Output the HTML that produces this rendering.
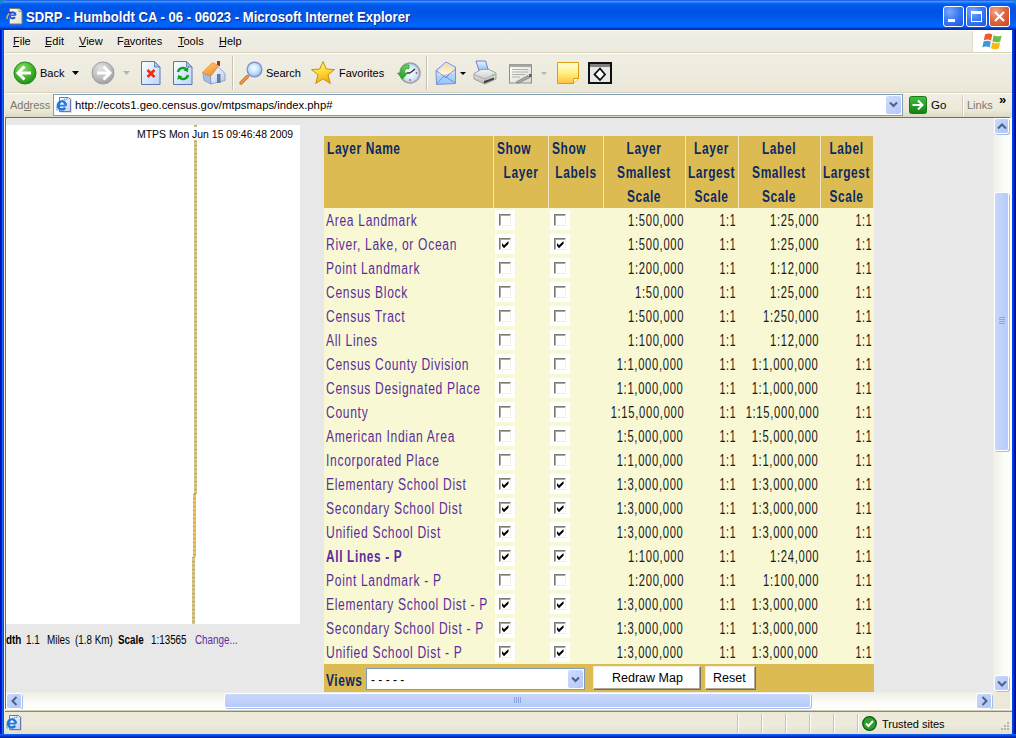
<!DOCTYPE html><html><head><meta charset="utf-8"><style>
*{margin:0;padding:0;box-sizing:border-box}
html,body{width:1016px;height:738px;overflow:hidden;background:#1A86C0;font-family:"Liberation Sans",sans-serif}
.ab{position:absolute}
.t{position:absolute;white-space:nowrap;line-height:1}
svg{position:absolute;overflow:visible}
.sb{position:absolute;border-radius:2px;background:linear-gradient(135deg,#CAD8FC,#B8CCF9 60%,#B0C6F8);box-shadow:0 0 0 1px #FFFFFF, 1px 1px 0 1px #A8BCE8}
</style></head><body>
<div class="ab" style="left:0px;top:0px;width:1016px;height:30px;background:linear-gradient(#0A3FD8 0px,#3D8FFF 1px,#3D95FF 2px,#0A6CF8 3px,#0058EE 5px,#0054E3 12px,#0058EA 18px,#0064FA 23px,#0066FF 26px,#005CF5 27px,#0040D4 28px,#0030B8 29px,#0030B8 30px);border-radius:7px 7px 0 0"></div>
<div class="ab" style="left:0px;top:30px;width:4px;height:708px;background:linear-gradient(90deg,#0010C8 0px,#0010C8 1px,#0420C8 1px,#0420C8 2px,#1868F0 2px,#1868F0 3px,#0050E8 3px);"></div>
<div class="ab" style="left:1012px;top:30px;width:4px;height:708px;background:linear-gradient(90deg,#0040F0 0px,#0040F0 1px,#0034D8 1px,#0034D8 2px,#001AA0 2px,#001AA0 3px,#001088 3px);"></div>
<div class="ab" style="left:0px;top:734px;width:1016px;height:4px;background:linear-gradient(#1A6AFF,#0040D8 50%,#001A98);"></div>
<div class="ab" style="left:4px;top:30px;width:1008px;height:704px;background:#ECE9D8;"></div>
<svg style="left:2px;top:4px" width="22" height="22" viewBox="0 0 22 22">
<defs><linearGradient id="tpg" x1="0" y1="0" x2="1" y2="1"><stop offset="0" stop-color="#FFFFFF"/><stop offset="1" stop-color="#E4E0CC"/></linearGradient></defs>
<path d="M7.5 4.5h9.5l3 3v12.5h-12.5z" fill="url(#tpg)" stroke="#8A7A5A" stroke-width="1"/>
<path d="M17 4.5v3h3" fill="#FFFFFF" stroke="#8A7A5A" stroke-width="0.8"/>
<path d="M13.6 11.2 A3 3 0 1 0 13 13.2" stroke="#2458D8" stroke-width="2" fill="none"/>
<path d="M8.2 11.2h5.4" stroke="#2458D8" stroke-width="1.4"/>
<path d="M13 8.5l1.5-0.5" stroke="#40C0F0" stroke-width="1.2"/>
<path d="M4.8 15 C5 12.5,6 10,8.5 8.5" stroke="#E8B060" stroke-width="1.4" fill="none"/>
<path d="M7 9.2 L9 8" stroke="#101880" stroke-width="1.2"/>
</svg>
<div class="t" style="left:27.00px;top:11.00px;font-size:14px;color:#0A1E6E;font-weight:bold;transform:scaleX(0.935);transform-origin:left;opacity:.75">SDRP - Humboldt CA - 06 - 06023 - Microsoft Internet Explorer</div>
<div class="t" style="left:26.00px;top:10.00px;font-size:14px;color:#FFFFFF;font-weight:bold;transform:scaleX(0.935);transform-origin:left;">SDRP - Humboldt CA - 06 - 06023 - Microsoft Internet Explorer</div>
<div class="ab" style="left:943px;top:6px;width:21px;height:21px;border:1px solid #FFFFFF;border-radius:3px;background:radial-gradient(circle at 30% 25%,#7AA8FF,#3C7CF5 45%,#2762E8 80%,#1D50D8)"></div>
<div class="ab" style="left:966px;top:6px;width:21px;height:21px;border:1px solid #FFFFFF;border-radius:3px;background:radial-gradient(circle at 30% 25%,#7AA8FF,#3C7CF5 45%,#2762E8 80%,#1D50D8)"></div>
<div class="ab" style="left:989px;top:6px;width:21px;height:21px;border:1px solid #FFFFFF;border-radius:3px;background:radial-gradient(circle at 30% 25%,#F2A58A,#E4673E 45%,#D4502A 80%,#C0401C)"></div>
<div class="ab" style="left:948px;top:19px;width:7px;height:3px;background:#FFFFFF;"></div>
<div class="ab" style="left:971px;top:11px;width:11px;height:11px;border:1px solid #FFF;border-top-width:3px"></div>
<svg style="left:989px;top:6px" width="21" height="21" viewBox="0 0 21 21"><path d="M6 6L15 15M15 6L6 15" stroke="#FFF" stroke-width="2.2"/></svg>
<div class="ab" style="left:4px;top:30px;width:1008px;height:1px;background:#FFFBF0;"></div>
<div class="ab" style="left:4px;top:31px;width:969px;height:21px;background:linear-gradient(#F0EEE5,#EDEBE0);"></div>
<div class="ab" style="left:973px;top:31px;width:39px;height:21px;background:#FFFFFF;"></div>
<div class="ab" style="left:972px;top:31px;width:1px;height:21px;background:#E0DCCB;"></div>
<div class="ab" style="left:4px;top:52px;width:1008px;height:1px;background:#D8D2BD;"></div>
<div class="ab" style="left:4px;top:53px;width:1008px;height:1px;background:#FFFFFF;"></div>
<div class="t" style="left:13.00px;top:36.00px;font-size:11px;color:#000;font-weight:normal;">File</div>
<div class="t" style="left:45.00px;top:36.00px;font-size:11px;color:#000;font-weight:normal;">Edit</div>
<div class="t" style="left:79.00px;top:36.00px;font-size:11px;color:#000;font-weight:normal;">View</div>
<div class="t" style="left:117.00px;top:36.00px;font-size:11px;color:#000;font-weight:normal;">Favorites</div>
<div class="t" style="left:178.00px;top:36.00px;font-size:11px;color:#000;font-weight:normal;">Tools</div>
<div class="t" style="left:219.00px;top:36.00px;font-size:11px;color:#000;font-weight:normal;">Help</div>
<div class="ab" style="left:13px;top:46px;width:6px;height:1px;background:#000;"></div>
<div class="ab" style="left:45px;top:46px;width:6px;height:1px;background:#000;"></div>
<div class="ab" style="left:79px;top:46px;width:7px;height:1px;background:#000;"></div>
<div class="ab" style="left:124px;top:46px;width:7px;height:1px;background:#000;"></div>
<div class="ab" style="left:178px;top:46px;width:6px;height:1px;background:#000;"></div>
<div class="ab" style="left:219px;top:46px;width:7px;height:1px;background:#000;"></div>
<svg style="left:983px;top:32px" width="20" height="19" viewBox="0 0 20 19">
<path d="M2 2.5 C4.5 1,7 1.2,9.3 2.6 L8 8.6 C5.8 7.2,3.4 7.2,0.8 8.5Z" fill="#F05A28"/>
<path d="M10.6 3.2 C13 4.6,15.6 4.6,18.6 3.4 L17.3 9.4 C14.5 10.6,12 10.5,9.4 9.2Z" fill="#6DBE45"/>
<path d="M0.6 9.6 C3.2 8.3,5.6 8.3,7.8 9.7 L6.6 15.6 C4.4 14.2,2 14.2,-0.6 15.6Z" fill="#3A9BD9"/>
<path d="M9.2 10.3 C11.8 11.6,14.3 11.7,17.1 10.5 L15.8 16.5 C13 17.7,10.6 17.6,8 16.3Z" fill="#FDB813"/>
</svg>
<div class="ab" style="left:4px;top:54px;width:1008px;height:38px;background:linear-gradient(#F0EEE4,#EDEADD 70%,#EAE7D8);"></div>
<div class="ab" style="left:4px;top:92px;width:1008px;height:1px;background:#D8D2BD;"></div>
<div class="ab" style="left:4px;top:93px;width:1008px;height:1px;background:#FFFFFF;"></div>
<div class="ab" style="left:232px;top:56px;width:1px;height:34px;background:#C5C2B2;"></div>
<div class="ab" style="left:233px;top:56px;width:1px;height:34px;background:#FFFFFF;"></div>
<div class="ab" style="left:426px;top:56px;width:1px;height:34px;background:#C5C2B2;"></div>
<div class="ab" style="left:427px;top:56px;width:1px;height:34px;background:#FFFFFF;"></div>
<svg style="left:13px;top:61px" width="24" height="24" viewBox="0 0 24 24">
<defs><radialGradient id="gb" cx="0.4" cy="0.3" r="0.75"><stop offset="0" stop-color="#8EE06A"/><stop offset="0.5" stop-color="#4CB830"/><stop offset="1" stop-color="#1C8E16"/></radialGradient></defs>
<circle cx="12" cy="12" r="11" fill="url(#gb)" stroke="#1A8A18" stroke-width="1"/>
<path d="M5.5 12h12.5" stroke="#FFF" stroke-width="3"/>
<path d="M11.5 5.5L5 12l6.5 6.5" stroke="#FFF" stroke-width="3" fill="none"/>
</svg>
<div class="t" style="left:40.00px;top:68.00px;font-size:11px;color:#000;font-weight:normal;">Back</div>
<svg style="left:72px;top:71px" width="7" height="4"><path d="M0 0h7l-3.5 4z" fill="#000"/></svg>
<svg style="left:91px;top:61px" width="24" height="24" viewBox="0 0 24 24">
<defs><radialGradient id="gf" cx="0.4" cy="0.3" r="0.75"><stop offset="0" stop-color="#E4E4E4"/><stop offset="0.6" stop-color="#BDBDBD"/><stop offset="1" stop-color="#9A9A9A"/></radialGradient></defs>
<circle cx="12" cy="12" r="11" fill="url(#gf)" stroke="#A0A0A0" stroke-width="1"/>
<path d="M6 12h12.5" stroke="#FFF" stroke-width="3"/>
<path d="M12.5 5.5L19 12l-6.5 6.5" stroke="#FFF" stroke-width="3" fill="none"/>
</svg>
<svg style="left:123px;top:71px" width="7" height="4"><path d="M0 0h7l-3.5 4z" fill="#B4B4B0"/></svg>
<svg style="left:141px;top:61px" width="20" height="24" viewBox="0 0 20 24">
<defs><linearGradient id="pg141" x1="0" y1="0" x2="1" y2="1"><stop offset="0" stop-color="#FFFFFF"/><stop offset="1" stop-color="#B8D4F8"/></linearGradient></defs>
<path d="M0.5 0.5h13l5.5 5.5v17.5h-18.5z" fill="url(#pg141)" stroke="#5E72B8" stroke-width="1"/>
<path d="M13.5 0.5v5.5h5.5z" fill="#A8C0EC" stroke="#5E72B8" stroke-width="0.8"/>
<path d="M6.5 9L13.5 16M13.5 9L6.5 16" stroke="#F02A10" stroke-width="2.6"/></svg>
<svg style="left:173px;top:61px" width="20" height="24" viewBox="0 0 20 24">
<defs><linearGradient id="pg173" x1="0" y1="0" x2="1" y2="1"><stop offset="0" stop-color="#FFFFFF"/><stop offset="1" stop-color="#B8D4F8"/></linearGradient></defs>
<path d="M0.5 0.5h13l5.5 5.5v17.5h-18.5z" fill="url(#pg173)" stroke="#5E72B8" stroke-width="1"/>
<path d="M13.5 0.5v5.5h5.5z" fill="#A8C0EC" stroke="#5E72B8" stroke-width="0.8"/>
<path d="M5 11 A5 5 0 0 1 13.5 8.5" stroke="#10A020" stroke-width="2.4" fill="none"/><path d="M15.5 6l-0.5 5-4.5-1.5z" fill="#10A020"/><path d="M15 14 A5 5 0 0 1 6.5 16.5" stroke="#10A020" stroke-width="2.4" fill="none"/><path d="M4.5 19l0.5-5 4.5 1.5z" fill="#10A020"/></svg>
<svg style="left:202px;top:61px" width="24" height="24" viewBox="0 0 24 24">
<defs><linearGradient id="hw" x1="0" y1="0" x2="1" y2="1"><stop offset="0" stop-color="#FFFFFF"/><stop offset="1" stop-color="#B0C8EC"/></linearGradient>
<linearGradient id="hr" x1="0" y1="0" x2="0.6" y2="1"><stop offset="0" stop-color="#FFD080"/><stop offset="1" stop-color="#F09030"/></linearGradient></defs>
<rect x="15" y="0" width="3" height="5" fill="#B02818"/>
<path d="M1 12L8.5 15.5 9 23 2 19.5z" fill="#A0C0EC" stroke="#7888C0" stroke-width="0.7"/>
<path d="M8.5 15.5L16 5.5 23 12.5 23 19.5 9 23z" fill="url(#hw)" stroke="#7888C0" stroke-width="0.7"/>
<path d="M0.3 11.5L10.5 1.5 16.5 4.5 8.5 15.5z" fill="url(#hr)" stroke="#E08020" stroke-width="0.6"/>
<rect x="15" y="13" width="3.5" height="9" fill="#6A76A8"/>
</svg>
<svg style="left:238px;top:60px" width="26" height="26" viewBox="0 0 26 26">
<defs><radialGradient id="sl" cx="0.45" cy="0.4" r="0.6"><stop offset="0" stop-color="#FFFFFF"/><stop offset="0.6" stop-color="#C0E0FA"/><stop offset="1" stop-color="#90C0F0"/></radialGradient></defs>
<path d="M9.5 16.5L3 23" stroke="#D07020" stroke-width="3.4" stroke-linecap="round"/>
<path d="M9.5 16.5L3 23" stroke="#F0A050" stroke-width="1.6" stroke-linecap="round"/>
<circle cx="16.5" cy="9.5" r="7.3" fill="url(#sl)" stroke="#8090D0" stroke-width="1.4"/>
</svg>
<div class="t" style="left:266.00px;top:68.00px;font-size:11px;color:#000;font-weight:normal;">Search</div>
<svg style="left:310px;top:60px" width="26" height="26" viewBox="0 0 26 26">
<defs><linearGradient id="st" x1="0" y1="0" x2="0.3" y2="1"><stop offset="0" stop-color="#FFF8A0"/><stop offset="0.5" stop-color="#FFE040"/><stop offset="1" stop-color="#F0B010"/></linearGradient></defs>
<path d="M13 1.5L16.2 9 24.5 9.6 18 14.8 20.3 23.5 13 18.8 5.7 23.5 8 14.8 1.5 9.6 9.8 9z" fill="url(#st)" stroke="#C89010" stroke-width="1" stroke-linejoin="round"/>
</svg>
<div class="t" style="left:339.00px;top:68.00px;font-size:11px;color:#000;font-weight:normal;">Favorites</div>
<svg style="left:396px;top:61px" width="25" height="24" viewBox="0 0 25 24">
<defs><radialGradient id="hc" cx="0.5" cy="0.5" r="0.5"><stop offset="0" stop-color="#FFFFFF"/><stop offset="0.7" stop-color="#D0E8FA"/><stop offset="1" stop-color="#A0C8F0"/></radialGradient>
<linearGradient id="ha" x1="0" y1="0" x2="0" y2="1"><stop offset="0" stop-color="#70D050"/><stop offset="1" stop-color="#20A020"/></linearGradient></defs>
<circle cx="14" cy="12" r="10" fill="url(#hc)" stroke="#A0A0A8" stroke-width="1.5"/>
<path d="M14 12l5-4M14 12h-3" stroke="#303030" stroke-width="1.4"/>
<circle cx="20.5" cy="12" r="0.9" fill="#F04020"/><circle cx="14" cy="19" r="0.9" fill="#F04020"/>
<path d="M13 4 C7 3,4 7,5 12 L1.5 12 6.5 18 11.5 12 8.5 12 C8 9,10 7,13 7.5z" fill="url(#ha)" stroke="#189018" stroke-width="0.6"/>
</svg>
<svg style="left:435px;top:61px" width="23" height="24" viewBox="0 0 23 24">
<defs><linearGradient id="ml" x1="0" y1="0" x2="0" y2="1"><stop offset="0" stop-color="#D8F0FF"/><stop offset="1" stop-color="#90C8F8"/></linearGradient>
<linearGradient id="mo" x1="0" y1="0" x2="0" y2="1"><stop offset="0" stop-color="#FFD890"/><stop offset="1" stop-color="#FFF8E8"/></linearGradient></defs>
<path d="M1 9.5L11 1 20.5 6v16.5L1.5 23.5z" fill="url(#ml)" stroke="#8A8AD8" stroke-width="1"/>
<path d="M3 10 L11 3 19 7.5 18.5 12 4 14z" fill="url(#mo)"/>
<path d="M1.5 23L9 15 20.5 22M9 15L11 17 14 13" stroke="#8A8AD8" stroke-width="1" fill="none"/>
<path d="M1 9.5L10.5 16.5 20.5 8" stroke="#8A8AD8" stroke-width="1" fill="none"/>
</svg>
<svg style="left:460px;top:72px" width="6" height="4"><path d="M0 0h6l-3 3z" fill="#000"/></svg>
<svg style="left:473px;top:60px" width="25" height="26" viewBox="0 0 25 26">
<defs><linearGradient id="pp" x1="0" y1="0" x2="0" y2="1"><stop offset="0" stop-color="#E8F4FF"/><stop offset="1" stop-color="#88C0F4"/></linearGradient>
<linearGradient id="pb" x1="0" y1="0" x2="0" y2="1"><stop offset="0" stop-color="#F4F4F4"/><stop offset="1" stop-color="#B8B8B8"/></linearGradient></defs>
<path d="M3 1h9.5l3 9.5h-9.5z" fill="url(#pp)" stroke="#7070C0" stroke-width="0.9"/>
<path d="M1 13.5L8 9.5 16 9.5 23 13 23 19 12 24 1 19z" fill="url(#pb)" stroke="#909090" stroke-width="0.8"/>
<path d="M1 14.5L12 19 23 14" stroke="#A0A0A0" stroke-width="0.8" fill="none"/>
<path d="M11 21l10-3.5v2l-10 4z" fill="#404040"/>
<rect x="19" y="14.5" width="2" height="1.2" fill="#50D050"/>
</svg>
<svg style="left:509px;top:64px" width="24" height="20" viewBox="0 0 24 20">
<defs><linearGradient id="eg" x1="0" y1="0" x2="1" y2="1"><stop offset="0" stop-color="#FFFFFF"/><stop offset="1" stop-color="#D8D8D4"/></linearGradient></defs>
<rect x="0.5" y="0.5" width="22" height="18.5" fill="url(#eg)" stroke="#909088" stroke-width="1"/>
<rect x="0.5" y="0.5" width="22" height="2.5" fill="#A8A8A0"/>
<path d="M3 5.5h16M3 8h16M3 10.5h13M3 13h8" stroke="#A0A09A" stroke-width="0.8"/>
<path d="M7 18l12-6.5 2 2-12 6z" fill="#A8A8A0" stroke="#707070" stroke-width="0.6"/>
<rect x="20" y="10" width="2.5" height="3" fill="#606060"/>
</svg>
<svg style="left:541px;top:72px" width="6" height="4"><path d="M0 0h6l-3 3z" fill="#B4B4B0"/></svg>
<svg style="left:557px;top:62px" width="22" height="22" viewBox="0 0 22 22">
<defs><linearGradient id="ng" x1="0" y1="0" x2="0" y2="1"><stop offset="0" stop-color="#FFFCE0"/><stop offset="0.5" stop-color="#FFF080"/><stop offset="1" stop-color="#FFC040"/></linearGradient></defs>
<path d="M0.5 0.5h21v16l-5 5h-16z" fill="url(#ng)" stroke="#D8A010" stroke-width="1"/>
<path d="M21.5 16.5h-5v5" fill="#FFF8C0" stroke="#D8A010" stroke-width="1"/>
</svg>
<svg style="left:588px;top:62px" width="24" height="22" viewBox="0 0 24 22">
<rect x="1" y="1" width="22" height="20" fill="#E8E8E8" stroke="#101010" stroke-width="2"/>
<rect x="2" y="2" width="20" height="3" fill="#808080"/>
<path d="M12 6.5L17 12.5 12 18 6.5 12.5z" fill="#FFFFFF" stroke="#101010" stroke-width="1.8"/>
</svg>
<div class="ab" style="left:4px;top:94px;width:1008px;height:23px;background:linear-gradient(#F0EEE4,#ECE9DA 70%,#DCD8C6);"></div>
<div class="t" style="left:10.00px;top:100.00px;font-size:11px;color:#7A7868;font-weight:normal;">Address</div>
<div class="ab" style="left:24px;top:110px;width:7px;height:1px;background:#7A7868;"></div>
<div class="ab" style="left:53px;top:94px;width:850px;height:22px;background:#FFFFFF;border:1px solid #7F9DB9"></div>
<svg style="left:54px;top:95px" width="20" height="20" viewBox="0 0 20 20">
<defs><linearGradient id="iep54" x1="0" y1="0" x2="1" y2="1"><stop offset="0" stop-color="#FFFFFF"/><stop offset="1" stop-color="#C0D0F4"/></linearGradient></defs>
<rect x="6.5" y="3.5" width="11" height="14" fill="#9A98A8" opacity="0.6"/>
<path d="M5.5 2.5h9l2 2v12h-11z" fill="url(#iep54)" stroke="#6C74B4" stroke-width="1"/>
<path d="M3.2 15.5 C1.5 12,5 5.5,13.5 3.8" stroke="#38A8F0" stroke-width="1.3" fill="none" stroke-dasharray="1.5 0.8"/>
<path d="M11.9 10.6 A4 4 0 1 0 11.2 12.8" stroke="#1E78E0" stroke-width="2.6" fill="none"/>
<path d="M4.5 10.6h7.6" stroke="#1E78E0" stroke-width="1.7"/>
<circle cx="8" cy="8.3" r="1" fill="#FFFFFF"/>
</svg>
<div class="t" style="left:75.00px;top:100.00px;font-size:11.3px;color:#000;font-weight:normal;">http://ecots1.geo.census.gov/mtpsmaps/index.php#</div>
<div class="ab" style="left:886px;top:96px;width:15px;height:18px;background:linear-gradient(135deg,#D0DCFC,#B4C8F8);border-radius:2px"></div>
<svg style="left:889px;top:101px" width="9" height="7"><path d="M1 1.5l3.5 3.5 3.5-3.5" stroke="#4D6185" stroke-width="2" fill="none"/></svg>
<svg style="left:909px;top:96px" width="18" height="18" viewBox="0 0 18 18">
<defs><linearGradient id="go" x1="0" y1="0" x2="0" y2="1"><stop offset="0" stop-color="#40C040"/><stop offset="1" stop-color="#108010"/></linearGradient></defs>
<rect x="0.5" y="0.5" width="17" height="17" rx="2" fill="url(#go)" stroke="#1A7A1A"/>
<path d="M3.5 9h10M9 4.5l4.5 4.5-4.5 4.5" stroke="#FFF" stroke-width="2" fill="none"/>
</svg>
<div class="t" style="left:931.00px;top:100.00px;font-size:11.5px;color:#000;font-weight:normal;">Go</div>
<div class="ab" style="left:962px;top:95px;width:1px;height:21px;background:#D0CCBC;"></div>
<div class="ab" style="left:963px;top:95px;width:1px;height:21px;background:#FFFFFF;"></div>
<div class="t" style="left:967.00px;top:100.00px;font-size:11px;color:#7A7868;font-weight:normal;">Links</div>
<div class="t" style="left:999.00px;top:93.00px;font-size:13px;color:#000;font-weight:bold;">&#187;</div>
<div class="ab" style="left:5px;top:117px;width:1005px;height:1px;background:#716F64;"></div>
<div class="ab" style="left:5px;top:117px;width:1px;height:594px;background:#716F64;"></div>
<div class="ab" style="left:4px;top:118px;width:1px;height:593px;background:#ACA899;"></div>
<div class="ab" style="left:4px;top:30px;width:1px;height:704px;background:#F5F1DE;"></div>
<div class="ab" style="left:6px;top:118px;width:987px;height:574px;background:#E8E8E8;"></div>
<div class="ab" style="left:6px;top:125px;width:294px;height:499px;background:#FFFFFF;"></div>
<div class="ab" style="left:194px;top:125px;width:3px;height:369px;background:repeating-linear-gradient(#E6A410 0px,#E6A410 1.5px,#D6C68C 1.5px,#D6C68C 4px);"></div>
<div class="ab" style="left:193px;top:494px;width:3px;height:63px;background:repeating-linear-gradient(#E6A410 0px,#E6A410 1.5px,#D6C68C 1.5px,#D6C68C 4px);"></div>
<div class="ab" style="left:192px;top:557px;width:3px;height:67px;background:repeating-linear-gradient(#E6A410 0px,#E6A410 1.5px,#D6C68C 1.5px,#D6C68C 4px);"></div>
<div class="ab" style="left:134px;top:127px;width:162px;height:13px;background:#FFFFFF;"></div>
<div class="t" style="left:137.00px;top:130.00px;font-size:10.45px;color:#000;font-weight:normal;">MTPS Mon Jun 15 09:46:48 2009</div>
<div class="t" style="left:6.00px;top:634.00px;font-size:12px;color:#000;font-weight:bold;transform:scaleX(0.820);transform-origin:left;">dth</div>
<div class="t" style="left:26.00px;top:634.00px;font-size:12px;color:#000;font-weight:normal;transform:scaleX(0.820);transform-origin:left;">1.1</div>
<div class="t" style="left:47.00px;top:634.00px;font-size:12px;color:#000;font-weight:normal;transform:scaleX(0.820);transform-origin:left;">Miles</div>
<div class="t" style="left:75.00px;top:634.00px;font-size:12px;color:#000;font-weight:normal;transform:scaleX(0.820);transform-origin:left;">(1.8 Km)</div>
<div class="t" style="left:118.00px;top:634.00px;font-size:12px;color:#000;font-weight:bold;transform:scaleX(0.820);transform-origin:left;">Scale</div>
<div class="t" style="left:151.00px;top:634.00px;font-size:12px;color:#000;font-weight:normal;transform:scaleX(0.820);transform-origin:left;">1:13565</div>
<div class="t" style="left:195.00px;top:634.00px;font-size:12px;color:#5A2CA0;font-weight:normal;transform:scaleX(0.820);transform-origin:left;">Change...</div>
<div class="ab" style="left:324px;top:136px;width:549px;height:72px;background:#DDBB53;"></div>
<div class="ab" style="left:493px;top:136px;width:1px;height:72px;background:#F0E6C4;"></div>
<div class="ab" style="left:548px;top:136px;width:1px;height:72px;background:#F0E6C4;"></div>
<div class="ab" style="left:603px;top:136px;width:1px;height:72px;background:#F0E6C4;"></div>
<div class="ab" style="left:685px;top:136px;width:1px;height:72px;background:#F0E6C4;"></div>
<div class="ab" style="left:738px;top:136px;width:1px;height:72px;background:#F0E6C4;"></div>
<div class="ab" style="left:820px;top:136px;width:1px;height:72px;background:#F0E6C4;"></div>
<div class="ab" style="left:324px;top:208px;width:550px;height:456px;background:#F8F9D4;"></div>
<div class="ab" style="left:324px;top:664px;width:550px;height:28px;background:#DDBB53;"></div>
<div class="t" style="left:327.00px;top:141.00px;font-size:16px;color:#0A2A66;font-weight:bold;transform:scaleX(0.745);transform-origin:left;letter-spacing:0.8px">Layer Name</div>
<div class="t" style="left:497.00px;top:141.00px;font-size:16px;color:#0A2A66;font-weight:bold;transform:scaleX(0.745);transform-origin:left;letter-spacing:0.8px">Show</div>
<div class="t" style="left:433.00px;top:165.00px;width:176px;text-align:center;font-size:16px;color:#0A2A66;font-weight:bold;transform:scaleX(0.745);transform-origin:center;letter-spacing:0.8px">Layer</div>
<div class="t" style="left:552.00px;top:141.00px;font-size:16px;color:#0A2A66;font-weight:bold;transform:scaleX(0.745);transform-origin:left;letter-spacing:0.8px">Show</div>
<div class="t" style="left:488.00px;top:165.00px;width:176px;text-align:center;font-size:16px;color:#0A2A66;font-weight:bold;transform:scaleX(0.745);transform-origin:center;letter-spacing:0.8px">Labels</div>
<div class="t" style="left:543.00px;top:141.00px;width:202px;text-align:center;font-size:16px;color:#0A2A66;font-weight:bold;transform:scaleX(0.745);transform-origin:center;letter-spacing:0.8px">Layer</div>
<div class="t" style="left:543.00px;top:165.00px;width:202px;text-align:center;font-size:16px;color:#0A2A66;font-weight:bold;transform:scaleX(0.745);transform-origin:center;letter-spacing:0.8px">Smallest</div>
<div class="t" style="left:543.00px;top:189.00px;width:202px;text-align:center;font-size:16px;color:#0A2A66;font-weight:bold;transform:scaleX(0.745);transform-origin:center;letter-spacing:0.8px">Scale</div>
<div class="t" style="left:625.00px;top:141.00px;width:173px;text-align:center;font-size:16px;color:#0A2A66;font-weight:bold;transform:scaleX(0.745);transform-origin:center;letter-spacing:0.8px">Layer</div>
<div class="t" style="left:625.00px;top:165.00px;width:173px;text-align:center;font-size:16px;color:#0A2A66;font-weight:bold;transform:scaleX(0.745);transform-origin:center;letter-spacing:0.8px">Largest</div>
<div class="t" style="left:625.00px;top:189.00px;width:173px;text-align:center;font-size:16px;color:#0A2A66;font-weight:bold;transform:scaleX(0.745);transform-origin:center;letter-spacing:0.8px">Scale</div>
<div class="t" style="left:678.00px;top:141.00px;width:202px;text-align:center;font-size:16px;color:#0A2A66;font-weight:bold;transform:scaleX(0.745);transform-origin:center;letter-spacing:0.8px">Label</div>
<div class="t" style="left:678.00px;top:165.00px;width:202px;text-align:center;font-size:16px;color:#0A2A66;font-weight:bold;transform:scaleX(0.745);transform-origin:center;letter-spacing:0.8px">Smallest</div>
<div class="t" style="left:678.00px;top:189.00px;width:202px;text-align:center;font-size:16px;color:#0A2A66;font-weight:bold;transform:scaleX(0.745);transform-origin:center;letter-spacing:0.8px">Scale</div>
<div class="t" style="left:760.00px;top:141.00px;width:173px;text-align:center;font-size:16px;color:#0A2A66;font-weight:bold;transform:scaleX(0.745);transform-origin:center;letter-spacing:0.8px">Label</div>
<div class="t" style="left:760.00px;top:165.00px;width:173px;text-align:center;font-size:16px;color:#0A2A66;font-weight:bold;transform:scaleX(0.745);transform-origin:center;letter-spacing:0.8px">Largest</div>
<div class="t" style="left:760.00px;top:189.00px;width:173px;text-align:center;font-size:16px;color:#0A2A66;font-weight:bold;transform:scaleX(0.745);transform-origin:center;letter-spacing:0.8px">Scale</div>
<div class="t" style="left:326.00px;top:213.00px;font-size:16px;color:#5B2C9E;font-weight:normal;transform:scaleX(0.755);transform-origin:left;letter-spacing:0.9px">Area Landmark</div>
<div class="ab" style="left:495px;top:210px;width:20px;height:20px;background:#FFFFFF;"></div>
<div class="ab" style="left:499px;top:214px;width:12px;height:12px;background:#FFF;border:1px solid;border-color:#7E7A6A #F1EFE2 #F1EFE2 #7E7A6A;box-shadow:inset 1px 1px 0 #ACA899"></div>
<div class="ab" style="left:550px;top:210px;width:20px;height:20px;background:#FFFFFF;"></div>
<div class="ab" style="left:554px;top:214px;width:12px;height:12px;background:#FFF;border:1px solid;border-color:#7E7A6A #F1EFE2 #F1EFE2 #7E7A6A;box-shadow:inset 1px 1px 0 #ACA899"></div>
<div class="t" style="right:332.00px;top:213.00px;font-size:16px;color:#1A1A1A;font-weight:normal;transform:scaleX(0.700);transform-origin:right;letter-spacing:1px">1:500,000</div>
<div class="t" style="right:280.00px;top:213.00px;font-size:16px;color:#1A1A1A;font-weight:normal;transform:scaleX(0.660);transform-origin:right;letter-spacing:1px">1:1</div>
<div class="t" style="right:197.00px;top:213.00px;font-size:16px;color:#1A1A1A;font-weight:normal;transform:scaleX(0.700);transform-origin:right;letter-spacing:1px">1:25,000</div>
<div class="t" style="right:144.00px;top:213.00px;font-size:16px;color:#1A1A1A;font-weight:normal;transform:scaleX(0.660);transform-origin:right;letter-spacing:1px">1:1</div>
<div class="t" style="left:326.00px;top:237.00px;font-size:16px;color:#5B2C9E;font-weight:normal;transform:scaleX(0.755);transform-origin:left;letter-spacing:0.9px">River, Lake, or Ocean</div>
<div class="ab" style="left:495px;top:234px;width:20px;height:20px;background:#FFFFFF;"></div>
<div class="ab" style="left:499px;top:238px;width:12px;height:12px;background:#FFF;border:1px solid;border-color:#7E7A6A #F1EFE2 #F1EFE2 #7E7A6A;box-shadow:inset 1px 1px 0 #ACA899"></div>
<svg style="left:499px;top:238px" width="12" height="12" viewBox="0 0 12 12"><path d="M3 5L5 7.3 9.5 3V5.8L5 10.2 3 7.8z" fill="#000"/></svg>
<div class="ab" style="left:550px;top:234px;width:20px;height:20px;background:#FFFFFF;"></div>
<div class="ab" style="left:554px;top:238px;width:12px;height:12px;background:#FFF;border:1px solid;border-color:#7E7A6A #F1EFE2 #F1EFE2 #7E7A6A;box-shadow:inset 1px 1px 0 #ACA899"></div>
<svg style="left:554px;top:238px" width="12" height="12" viewBox="0 0 12 12"><path d="M3 5L5 7.3 9.5 3V5.8L5 10.2 3 7.8z" fill="#000"/></svg>
<div class="t" style="right:332.00px;top:237.00px;font-size:16px;color:#1A1A1A;font-weight:normal;transform:scaleX(0.700);transform-origin:right;letter-spacing:1px">1:500,000</div>
<div class="t" style="right:280.00px;top:237.00px;font-size:16px;color:#1A1A1A;font-weight:normal;transform:scaleX(0.660);transform-origin:right;letter-spacing:1px">1:1</div>
<div class="t" style="right:197.00px;top:237.00px;font-size:16px;color:#1A1A1A;font-weight:normal;transform:scaleX(0.700);transform-origin:right;letter-spacing:1px">1:25,000</div>
<div class="t" style="right:144.00px;top:237.00px;font-size:16px;color:#1A1A1A;font-weight:normal;transform:scaleX(0.660);transform-origin:right;letter-spacing:1px">1:1</div>
<div class="t" style="left:326.00px;top:261.00px;font-size:16px;color:#5B2C9E;font-weight:normal;transform:scaleX(0.755);transform-origin:left;letter-spacing:0.9px">Point Landmark</div>
<div class="ab" style="left:495px;top:258px;width:20px;height:20px;background:#FFFFFF;"></div>
<div class="ab" style="left:499px;top:262px;width:12px;height:12px;background:#FFF;border:1px solid;border-color:#7E7A6A #F1EFE2 #F1EFE2 #7E7A6A;box-shadow:inset 1px 1px 0 #ACA899"></div>
<div class="ab" style="left:550px;top:258px;width:20px;height:20px;background:#FFFFFF;"></div>
<div class="ab" style="left:554px;top:262px;width:12px;height:12px;background:#FFF;border:1px solid;border-color:#7E7A6A #F1EFE2 #F1EFE2 #7E7A6A;box-shadow:inset 1px 1px 0 #ACA899"></div>
<div class="t" style="right:332.00px;top:261.00px;font-size:16px;color:#1A1A1A;font-weight:normal;transform:scaleX(0.700);transform-origin:right;letter-spacing:1px">1:200,000</div>
<div class="t" style="right:280.00px;top:261.00px;font-size:16px;color:#1A1A1A;font-weight:normal;transform:scaleX(0.660);transform-origin:right;letter-spacing:1px">1:1</div>
<div class="t" style="right:197.00px;top:261.00px;font-size:16px;color:#1A1A1A;font-weight:normal;transform:scaleX(0.700);transform-origin:right;letter-spacing:1px">1:12,000</div>
<div class="t" style="right:144.00px;top:261.00px;font-size:16px;color:#1A1A1A;font-weight:normal;transform:scaleX(0.660);transform-origin:right;letter-spacing:1px">1:1</div>
<div class="t" style="left:326.00px;top:285.00px;font-size:16px;color:#5B2C9E;font-weight:normal;transform:scaleX(0.755);transform-origin:left;letter-spacing:0.9px">Census Block</div>
<div class="ab" style="left:495px;top:282px;width:20px;height:20px;background:#FFFFFF;"></div>
<div class="ab" style="left:499px;top:286px;width:12px;height:12px;background:#FFF;border:1px solid;border-color:#7E7A6A #F1EFE2 #F1EFE2 #7E7A6A;box-shadow:inset 1px 1px 0 #ACA899"></div>
<div class="ab" style="left:550px;top:282px;width:20px;height:20px;background:#FFFFFF;"></div>
<div class="ab" style="left:554px;top:286px;width:12px;height:12px;background:#FFF;border:1px solid;border-color:#7E7A6A #F1EFE2 #F1EFE2 #7E7A6A;box-shadow:inset 1px 1px 0 #ACA899"></div>
<div class="t" style="right:332.00px;top:285.00px;font-size:16px;color:#1A1A1A;font-weight:normal;transform:scaleX(0.700);transform-origin:right;letter-spacing:1px">1:50,000</div>
<div class="t" style="right:280.00px;top:285.00px;font-size:16px;color:#1A1A1A;font-weight:normal;transform:scaleX(0.660);transform-origin:right;letter-spacing:1px">1:1</div>
<div class="t" style="right:197.00px;top:285.00px;font-size:16px;color:#1A1A1A;font-weight:normal;transform:scaleX(0.700);transform-origin:right;letter-spacing:1px">1:25,000</div>
<div class="t" style="right:144.00px;top:285.00px;font-size:16px;color:#1A1A1A;font-weight:normal;transform:scaleX(0.660);transform-origin:right;letter-spacing:1px">1:1</div>
<div class="t" style="left:326.00px;top:309.00px;font-size:16px;color:#5B2C9E;font-weight:normal;transform:scaleX(0.755);transform-origin:left;letter-spacing:0.9px">Census Tract</div>
<div class="ab" style="left:495px;top:306px;width:20px;height:20px;background:#FFFFFF;"></div>
<div class="ab" style="left:499px;top:310px;width:12px;height:12px;background:#FFF;border:1px solid;border-color:#7E7A6A #F1EFE2 #F1EFE2 #7E7A6A;box-shadow:inset 1px 1px 0 #ACA899"></div>
<div class="ab" style="left:550px;top:306px;width:20px;height:20px;background:#FFFFFF;"></div>
<div class="ab" style="left:554px;top:310px;width:12px;height:12px;background:#FFF;border:1px solid;border-color:#7E7A6A #F1EFE2 #F1EFE2 #7E7A6A;box-shadow:inset 1px 1px 0 #ACA899"></div>
<div class="t" style="right:332.00px;top:309.00px;font-size:16px;color:#1A1A1A;font-weight:normal;transform:scaleX(0.700);transform-origin:right;letter-spacing:1px">1:500,000</div>
<div class="t" style="right:280.00px;top:309.00px;font-size:16px;color:#1A1A1A;font-weight:normal;transform:scaleX(0.660);transform-origin:right;letter-spacing:1px">1:1</div>
<div class="t" style="right:197.00px;top:309.00px;font-size:16px;color:#1A1A1A;font-weight:normal;transform:scaleX(0.700);transform-origin:right;letter-spacing:1px">1:250,000</div>
<div class="t" style="right:144.00px;top:309.00px;font-size:16px;color:#1A1A1A;font-weight:normal;transform:scaleX(0.660);transform-origin:right;letter-spacing:1px">1:1</div>
<div class="t" style="left:326.00px;top:333.00px;font-size:16px;color:#5B2C9E;font-weight:normal;transform:scaleX(0.755);transform-origin:left;letter-spacing:0.9px">All Lines</div>
<div class="ab" style="left:495px;top:330px;width:20px;height:20px;background:#FFFFFF;"></div>
<div class="ab" style="left:499px;top:334px;width:12px;height:12px;background:#FFF;border:1px solid;border-color:#7E7A6A #F1EFE2 #F1EFE2 #7E7A6A;box-shadow:inset 1px 1px 0 #ACA899"></div>
<div class="ab" style="left:550px;top:330px;width:20px;height:20px;background:#FFFFFF;"></div>
<div class="ab" style="left:554px;top:334px;width:12px;height:12px;background:#FFF;border:1px solid;border-color:#7E7A6A #F1EFE2 #F1EFE2 #7E7A6A;box-shadow:inset 1px 1px 0 #ACA899"></div>
<div class="t" style="right:332.00px;top:333.00px;font-size:16px;color:#1A1A1A;font-weight:normal;transform:scaleX(0.700);transform-origin:right;letter-spacing:1px">1:100,000</div>
<div class="t" style="right:280.00px;top:333.00px;font-size:16px;color:#1A1A1A;font-weight:normal;transform:scaleX(0.660);transform-origin:right;letter-spacing:1px">1:1</div>
<div class="t" style="right:197.00px;top:333.00px;font-size:16px;color:#1A1A1A;font-weight:normal;transform:scaleX(0.700);transform-origin:right;letter-spacing:1px">1:12,000</div>
<div class="t" style="right:144.00px;top:333.00px;font-size:16px;color:#1A1A1A;font-weight:normal;transform:scaleX(0.660);transform-origin:right;letter-spacing:1px">1:1</div>
<div class="t" style="left:326.00px;top:357.00px;font-size:16px;color:#5B2C9E;font-weight:normal;transform:scaleX(0.755);transform-origin:left;letter-spacing:0.9px">Census County Division</div>
<div class="ab" style="left:495px;top:354px;width:20px;height:20px;background:#FFFFFF;"></div>
<div class="ab" style="left:499px;top:358px;width:12px;height:12px;background:#FFF;border:1px solid;border-color:#7E7A6A #F1EFE2 #F1EFE2 #7E7A6A;box-shadow:inset 1px 1px 0 #ACA899"></div>
<div class="ab" style="left:550px;top:354px;width:20px;height:20px;background:#FFFFFF;"></div>
<div class="ab" style="left:554px;top:358px;width:12px;height:12px;background:#FFF;border:1px solid;border-color:#7E7A6A #F1EFE2 #F1EFE2 #7E7A6A;box-shadow:inset 1px 1px 0 #ACA899"></div>
<div class="t" style="right:332.00px;top:357.00px;font-size:16px;color:#1A1A1A;font-weight:normal;transform:scaleX(0.700);transform-origin:right;letter-spacing:1px">1:1,000,000</div>
<div class="t" style="right:280.00px;top:357.00px;font-size:16px;color:#1A1A1A;font-weight:normal;transform:scaleX(0.660);transform-origin:right;letter-spacing:1px">1:1</div>
<div class="t" style="right:197.00px;top:357.00px;font-size:16px;color:#1A1A1A;font-weight:normal;transform:scaleX(0.700);transform-origin:right;letter-spacing:1px">1:1,000,000</div>
<div class="t" style="right:144.00px;top:357.00px;font-size:16px;color:#1A1A1A;font-weight:normal;transform:scaleX(0.660);transform-origin:right;letter-spacing:1px">1:1</div>
<div class="t" style="left:326.00px;top:381.00px;font-size:16px;color:#5B2C9E;font-weight:normal;transform:scaleX(0.755);transform-origin:left;letter-spacing:0.9px">Census Designated Place</div>
<div class="ab" style="left:495px;top:378px;width:20px;height:20px;background:#FFFFFF;"></div>
<div class="ab" style="left:499px;top:382px;width:12px;height:12px;background:#FFF;border:1px solid;border-color:#7E7A6A #F1EFE2 #F1EFE2 #7E7A6A;box-shadow:inset 1px 1px 0 #ACA899"></div>
<div class="ab" style="left:550px;top:378px;width:20px;height:20px;background:#FFFFFF;"></div>
<div class="ab" style="left:554px;top:382px;width:12px;height:12px;background:#FFF;border:1px solid;border-color:#7E7A6A #F1EFE2 #F1EFE2 #7E7A6A;box-shadow:inset 1px 1px 0 #ACA899"></div>
<div class="t" style="right:332.00px;top:381.00px;font-size:16px;color:#1A1A1A;font-weight:normal;transform:scaleX(0.700);transform-origin:right;letter-spacing:1px">1:1,000,000</div>
<div class="t" style="right:280.00px;top:381.00px;font-size:16px;color:#1A1A1A;font-weight:normal;transform:scaleX(0.660);transform-origin:right;letter-spacing:1px">1:1</div>
<div class="t" style="right:197.00px;top:381.00px;font-size:16px;color:#1A1A1A;font-weight:normal;transform:scaleX(0.700);transform-origin:right;letter-spacing:1px">1:1,000,000</div>
<div class="t" style="right:144.00px;top:381.00px;font-size:16px;color:#1A1A1A;font-weight:normal;transform:scaleX(0.660);transform-origin:right;letter-spacing:1px">1:1</div>
<div class="t" style="left:326.00px;top:405.00px;font-size:16px;color:#5B2C9E;font-weight:normal;transform:scaleX(0.755);transform-origin:left;letter-spacing:0.9px">County</div>
<div class="ab" style="left:495px;top:402px;width:20px;height:20px;background:#FFFFFF;"></div>
<div class="ab" style="left:499px;top:406px;width:12px;height:12px;background:#FFF;border:1px solid;border-color:#7E7A6A #F1EFE2 #F1EFE2 #7E7A6A;box-shadow:inset 1px 1px 0 #ACA899"></div>
<div class="ab" style="left:550px;top:402px;width:20px;height:20px;background:#FFFFFF;"></div>
<div class="ab" style="left:554px;top:406px;width:12px;height:12px;background:#FFF;border:1px solid;border-color:#7E7A6A #F1EFE2 #F1EFE2 #7E7A6A;box-shadow:inset 1px 1px 0 #ACA899"></div>
<div class="t" style="right:332.00px;top:405.00px;font-size:16px;color:#1A1A1A;font-weight:normal;transform:scaleX(0.700);transform-origin:right;letter-spacing:1px">1:15,000,000</div>
<div class="t" style="right:280.00px;top:405.00px;font-size:16px;color:#1A1A1A;font-weight:normal;transform:scaleX(0.660);transform-origin:right;letter-spacing:1px">1:1</div>
<div class="t" style="right:197.00px;top:405.00px;font-size:16px;color:#1A1A1A;font-weight:normal;transform:scaleX(0.700);transform-origin:right;letter-spacing:1px">1:15,000,000</div>
<div class="t" style="right:144.00px;top:405.00px;font-size:16px;color:#1A1A1A;font-weight:normal;transform:scaleX(0.660);transform-origin:right;letter-spacing:1px">1:1</div>
<div class="t" style="left:326.00px;top:429.00px;font-size:16px;color:#5B2C9E;font-weight:normal;transform:scaleX(0.755);transform-origin:left;letter-spacing:0.9px">American Indian Area</div>
<div class="ab" style="left:495px;top:426px;width:20px;height:20px;background:#FFFFFF;"></div>
<div class="ab" style="left:499px;top:430px;width:12px;height:12px;background:#FFF;border:1px solid;border-color:#7E7A6A #F1EFE2 #F1EFE2 #7E7A6A;box-shadow:inset 1px 1px 0 #ACA899"></div>
<div class="ab" style="left:550px;top:426px;width:20px;height:20px;background:#FFFFFF;"></div>
<div class="ab" style="left:554px;top:430px;width:12px;height:12px;background:#FFF;border:1px solid;border-color:#7E7A6A #F1EFE2 #F1EFE2 #7E7A6A;box-shadow:inset 1px 1px 0 #ACA899"></div>
<div class="t" style="right:332.00px;top:429.00px;font-size:16px;color:#1A1A1A;font-weight:normal;transform:scaleX(0.700);transform-origin:right;letter-spacing:1px">1:5,000,000</div>
<div class="t" style="right:280.00px;top:429.00px;font-size:16px;color:#1A1A1A;font-weight:normal;transform:scaleX(0.660);transform-origin:right;letter-spacing:1px">1:1</div>
<div class="t" style="right:197.00px;top:429.00px;font-size:16px;color:#1A1A1A;font-weight:normal;transform:scaleX(0.700);transform-origin:right;letter-spacing:1px">1:5,000,000</div>
<div class="t" style="right:144.00px;top:429.00px;font-size:16px;color:#1A1A1A;font-weight:normal;transform:scaleX(0.660);transform-origin:right;letter-spacing:1px">1:1</div>
<div class="t" style="left:326.00px;top:453.00px;font-size:16px;color:#5B2C9E;font-weight:normal;transform:scaleX(0.755);transform-origin:left;letter-spacing:0.9px">Incorporated Place</div>
<div class="ab" style="left:495px;top:450px;width:20px;height:20px;background:#FFFFFF;"></div>
<div class="ab" style="left:499px;top:454px;width:12px;height:12px;background:#FFF;border:1px solid;border-color:#7E7A6A #F1EFE2 #F1EFE2 #7E7A6A;box-shadow:inset 1px 1px 0 #ACA899"></div>
<div class="ab" style="left:550px;top:450px;width:20px;height:20px;background:#FFFFFF;"></div>
<div class="ab" style="left:554px;top:454px;width:12px;height:12px;background:#FFF;border:1px solid;border-color:#7E7A6A #F1EFE2 #F1EFE2 #7E7A6A;box-shadow:inset 1px 1px 0 #ACA899"></div>
<div class="t" style="right:332.00px;top:453.00px;font-size:16px;color:#1A1A1A;font-weight:normal;transform:scaleX(0.700);transform-origin:right;letter-spacing:1px">1:1,000,000</div>
<div class="t" style="right:280.00px;top:453.00px;font-size:16px;color:#1A1A1A;font-weight:normal;transform:scaleX(0.660);transform-origin:right;letter-spacing:1px">1:1</div>
<div class="t" style="right:197.00px;top:453.00px;font-size:16px;color:#1A1A1A;font-weight:normal;transform:scaleX(0.700);transform-origin:right;letter-spacing:1px">1:1,000,000</div>
<div class="t" style="right:144.00px;top:453.00px;font-size:16px;color:#1A1A1A;font-weight:normal;transform:scaleX(0.660);transform-origin:right;letter-spacing:1px">1:1</div>
<div class="t" style="left:326.00px;top:477.00px;font-size:16px;color:#5B2C9E;font-weight:normal;transform:scaleX(0.755);transform-origin:left;letter-spacing:0.9px">Elementary School Dist</div>
<div class="ab" style="left:495px;top:474px;width:20px;height:20px;background:#FFFFFF;"></div>
<div class="ab" style="left:499px;top:478px;width:12px;height:12px;background:#FFF;border:1px solid;border-color:#7E7A6A #F1EFE2 #F1EFE2 #7E7A6A;box-shadow:inset 1px 1px 0 #ACA899"></div>
<svg style="left:499px;top:478px" width="12" height="12" viewBox="0 0 12 12"><path d="M3 5L5 7.3 9.5 3V5.8L5 10.2 3 7.8z" fill="#000"/></svg>
<div class="ab" style="left:550px;top:474px;width:20px;height:20px;background:#FFFFFF;"></div>
<div class="ab" style="left:554px;top:478px;width:12px;height:12px;background:#FFF;border:1px solid;border-color:#7E7A6A #F1EFE2 #F1EFE2 #7E7A6A;box-shadow:inset 1px 1px 0 #ACA899"></div>
<svg style="left:554px;top:478px" width="12" height="12" viewBox="0 0 12 12"><path d="M3 5L5 7.3 9.5 3V5.8L5 10.2 3 7.8z" fill="#000"/></svg>
<div class="t" style="right:332.00px;top:477.00px;font-size:16px;color:#1A1A1A;font-weight:normal;transform:scaleX(0.700);transform-origin:right;letter-spacing:1px">1:3,000,000</div>
<div class="t" style="right:280.00px;top:477.00px;font-size:16px;color:#1A1A1A;font-weight:normal;transform:scaleX(0.660);transform-origin:right;letter-spacing:1px">1:1</div>
<div class="t" style="right:197.00px;top:477.00px;font-size:16px;color:#1A1A1A;font-weight:normal;transform:scaleX(0.700);transform-origin:right;letter-spacing:1px">1:3,000,000</div>
<div class="t" style="right:144.00px;top:477.00px;font-size:16px;color:#1A1A1A;font-weight:normal;transform:scaleX(0.660);transform-origin:right;letter-spacing:1px">1:1</div>
<div class="t" style="left:326.00px;top:501.00px;font-size:16px;color:#5B2C9E;font-weight:normal;transform:scaleX(0.755);transform-origin:left;letter-spacing:0.9px">Secondary School Dist</div>
<div class="ab" style="left:495px;top:498px;width:20px;height:20px;background:#FFFFFF;"></div>
<div class="ab" style="left:499px;top:502px;width:12px;height:12px;background:#FFF;border:1px solid;border-color:#7E7A6A #F1EFE2 #F1EFE2 #7E7A6A;box-shadow:inset 1px 1px 0 #ACA899"></div>
<svg style="left:499px;top:502px" width="12" height="12" viewBox="0 0 12 12"><path d="M3 5L5 7.3 9.5 3V5.8L5 10.2 3 7.8z" fill="#000"/></svg>
<div class="ab" style="left:550px;top:498px;width:20px;height:20px;background:#FFFFFF;"></div>
<div class="ab" style="left:554px;top:502px;width:12px;height:12px;background:#FFF;border:1px solid;border-color:#7E7A6A #F1EFE2 #F1EFE2 #7E7A6A;box-shadow:inset 1px 1px 0 #ACA899"></div>
<svg style="left:554px;top:502px" width="12" height="12" viewBox="0 0 12 12"><path d="M3 5L5 7.3 9.5 3V5.8L5 10.2 3 7.8z" fill="#000"/></svg>
<div class="t" style="right:332.00px;top:501.00px;font-size:16px;color:#1A1A1A;font-weight:normal;transform:scaleX(0.700);transform-origin:right;letter-spacing:1px">1:3,000,000</div>
<div class="t" style="right:280.00px;top:501.00px;font-size:16px;color:#1A1A1A;font-weight:normal;transform:scaleX(0.660);transform-origin:right;letter-spacing:1px">1:1</div>
<div class="t" style="right:197.00px;top:501.00px;font-size:16px;color:#1A1A1A;font-weight:normal;transform:scaleX(0.700);transform-origin:right;letter-spacing:1px">1:3,000,000</div>
<div class="t" style="right:144.00px;top:501.00px;font-size:16px;color:#1A1A1A;font-weight:normal;transform:scaleX(0.660);transform-origin:right;letter-spacing:1px">1:1</div>
<div class="t" style="left:326.00px;top:525.00px;font-size:16px;color:#5B2C9E;font-weight:normal;transform:scaleX(0.755);transform-origin:left;letter-spacing:0.9px">Unified School Dist</div>
<div class="ab" style="left:495px;top:522px;width:20px;height:20px;background:#FFFFFF;"></div>
<div class="ab" style="left:499px;top:526px;width:12px;height:12px;background:#FFF;border:1px solid;border-color:#7E7A6A #F1EFE2 #F1EFE2 #7E7A6A;box-shadow:inset 1px 1px 0 #ACA899"></div>
<svg style="left:499px;top:526px" width="12" height="12" viewBox="0 0 12 12"><path d="M3 5L5 7.3 9.5 3V5.8L5 10.2 3 7.8z" fill="#000"/></svg>
<div class="ab" style="left:550px;top:522px;width:20px;height:20px;background:#FFFFFF;"></div>
<div class="ab" style="left:554px;top:526px;width:12px;height:12px;background:#FFF;border:1px solid;border-color:#7E7A6A #F1EFE2 #F1EFE2 #7E7A6A;box-shadow:inset 1px 1px 0 #ACA899"></div>
<svg style="left:554px;top:526px" width="12" height="12" viewBox="0 0 12 12"><path d="M3 5L5 7.3 9.5 3V5.8L5 10.2 3 7.8z" fill="#000"/></svg>
<div class="t" style="right:332.00px;top:525.00px;font-size:16px;color:#1A1A1A;font-weight:normal;transform:scaleX(0.700);transform-origin:right;letter-spacing:1px">1:3,000,000</div>
<div class="t" style="right:280.00px;top:525.00px;font-size:16px;color:#1A1A1A;font-weight:normal;transform:scaleX(0.660);transform-origin:right;letter-spacing:1px">1:1</div>
<div class="t" style="right:197.00px;top:525.00px;font-size:16px;color:#1A1A1A;font-weight:normal;transform:scaleX(0.700);transform-origin:right;letter-spacing:1px">1:3,000,000</div>
<div class="t" style="right:144.00px;top:525.00px;font-size:16px;color:#1A1A1A;font-weight:normal;transform:scaleX(0.660);transform-origin:right;letter-spacing:1px">1:1</div>
<div class="t" style="left:326.00px;top:549.00px;font-size:16px;color:#5B2C9E;font-weight:bold;transform:scaleX(0.740);transform-origin:left;letter-spacing:0.9px">All Lines - P</div>
<div class="ab" style="left:495px;top:546px;width:20px;height:20px;background:#FFFFFF;"></div>
<div class="ab" style="left:499px;top:550px;width:12px;height:12px;background:#FFF;border:1px solid;border-color:#7E7A6A #F1EFE2 #F1EFE2 #7E7A6A;box-shadow:inset 1px 1px 0 #ACA899"></div>
<svg style="left:499px;top:550px" width="12" height="12" viewBox="0 0 12 12"><path d="M3 5L5 7.3 9.5 3V5.8L5 10.2 3 7.8z" fill="#000"/></svg>
<div class="ab" style="left:550px;top:546px;width:20px;height:20px;background:#FFFFFF;"></div>
<div class="ab" style="left:554px;top:550px;width:12px;height:12px;background:#FFF;border:1px solid;border-color:#7E7A6A #F1EFE2 #F1EFE2 #7E7A6A;box-shadow:inset 1px 1px 0 #ACA899"></div>
<svg style="left:554px;top:550px" width="12" height="12" viewBox="0 0 12 12"><path d="M3 5L5 7.3 9.5 3V5.8L5 10.2 3 7.8z" fill="#000"/></svg>
<div class="t" style="right:332.00px;top:549.00px;font-size:16px;color:#1A1A1A;font-weight:normal;transform:scaleX(0.700);transform-origin:right;letter-spacing:1px">1:100,000</div>
<div class="t" style="right:280.00px;top:549.00px;font-size:16px;color:#1A1A1A;font-weight:normal;transform:scaleX(0.660);transform-origin:right;letter-spacing:1px">1:1</div>
<div class="t" style="right:197.00px;top:549.00px;font-size:16px;color:#1A1A1A;font-weight:normal;transform:scaleX(0.700);transform-origin:right;letter-spacing:1px">1:24,000</div>
<div class="t" style="right:144.00px;top:549.00px;font-size:16px;color:#1A1A1A;font-weight:normal;transform:scaleX(0.660);transform-origin:right;letter-spacing:1px">1:1</div>
<div class="t" style="left:326.00px;top:573.00px;font-size:16px;color:#5B2C9E;font-weight:normal;transform:scaleX(0.755);transform-origin:left;letter-spacing:0.9px">Point Landmark - P</div>
<div class="ab" style="left:495px;top:570px;width:20px;height:20px;background:#FFFFFF;"></div>
<div class="ab" style="left:499px;top:574px;width:12px;height:12px;background:#FFF;border:1px solid;border-color:#7E7A6A #F1EFE2 #F1EFE2 #7E7A6A;box-shadow:inset 1px 1px 0 #ACA899"></div>
<div class="ab" style="left:550px;top:570px;width:20px;height:20px;background:#FFFFFF;"></div>
<div class="ab" style="left:554px;top:574px;width:12px;height:12px;background:#FFF;border:1px solid;border-color:#7E7A6A #F1EFE2 #F1EFE2 #7E7A6A;box-shadow:inset 1px 1px 0 #ACA899"></div>
<div class="t" style="right:332.00px;top:573.00px;font-size:16px;color:#1A1A1A;font-weight:normal;transform:scaleX(0.700);transform-origin:right;letter-spacing:1px">1:200,000</div>
<div class="t" style="right:280.00px;top:573.00px;font-size:16px;color:#1A1A1A;font-weight:normal;transform:scaleX(0.660);transform-origin:right;letter-spacing:1px">1:1</div>
<div class="t" style="right:197.00px;top:573.00px;font-size:16px;color:#1A1A1A;font-weight:normal;transform:scaleX(0.700);transform-origin:right;letter-spacing:1px">1:100,000</div>
<div class="t" style="right:144.00px;top:573.00px;font-size:16px;color:#1A1A1A;font-weight:normal;transform:scaleX(0.660);transform-origin:right;letter-spacing:1px">1:1</div>
<div class="t" style="left:326.00px;top:597.00px;font-size:16px;color:#5B2C9E;font-weight:normal;transform:scaleX(0.755);transform-origin:left;letter-spacing:0.9px">Elementary School Dist - P</div>
<div class="ab" style="left:495px;top:594px;width:20px;height:20px;background:#FFFFFF;"></div>
<div class="ab" style="left:499px;top:598px;width:12px;height:12px;background:#FFF;border:1px solid;border-color:#7E7A6A #F1EFE2 #F1EFE2 #7E7A6A;box-shadow:inset 1px 1px 0 #ACA899"></div>
<svg style="left:499px;top:598px" width="12" height="12" viewBox="0 0 12 12"><path d="M3 5L5 7.3 9.5 3V5.8L5 10.2 3 7.8z" fill="#000"/></svg>
<div class="ab" style="left:550px;top:594px;width:20px;height:20px;background:#FFFFFF;"></div>
<div class="ab" style="left:554px;top:598px;width:12px;height:12px;background:#FFF;border:1px solid;border-color:#7E7A6A #F1EFE2 #F1EFE2 #7E7A6A;box-shadow:inset 1px 1px 0 #ACA899"></div>
<svg style="left:554px;top:598px" width="12" height="12" viewBox="0 0 12 12"><path d="M3 5L5 7.3 9.5 3V5.8L5 10.2 3 7.8z" fill="#000"/></svg>
<div class="t" style="right:332.00px;top:597.00px;font-size:16px;color:#1A1A1A;font-weight:normal;transform:scaleX(0.700);transform-origin:right;letter-spacing:1px">1:3,000,000</div>
<div class="t" style="right:280.00px;top:597.00px;font-size:16px;color:#1A1A1A;font-weight:normal;transform:scaleX(0.660);transform-origin:right;letter-spacing:1px">1:1</div>
<div class="t" style="right:197.00px;top:597.00px;font-size:16px;color:#1A1A1A;font-weight:normal;transform:scaleX(0.700);transform-origin:right;letter-spacing:1px">1:3,000,000</div>
<div class="t" style="right:144.00px;top:597.00px;font-size:16px;color:#1A1A1A;font-weight:normal;transform:scaleX(0.660);transform-origin:right;letter-spacing:1px">1:1</div>
<div class="t" style="left:326.00px;top:621.00px;font-size:16px;color:#5B2C9E;font-weight:normal;transform:scaleX(0.755);transform-origin:left;letter-spacing:0.9px">Secondary School Dist - P</div>
<div class="ab" style="left:495px;top:618px;width:20px;height:20px;background:#FFFFFF;"></div>
<div class="ab" style="left:499px;top:622px;width:12px;height:12px;background:#FFF;border:1px solid;border-color:#7E7A6A #F1EFE2 #F1EFE2 #7E7A6A;box-shadow:inset 1px 1px 0 #ACA899"></div>
<svg style="left:499px;top:622px" width="12" height="12" viewBox="0 0 12 12"><path d="M3 5L5 7.3 9.5 3V5.8L5 10.2 3 7.8z" fill="#000"/></svg>
<div class="ab" style="left:550px;top:618px;width:20px;height:20px;background:#FFFFFF;"></div>
<div class="ab" style="left:554px;top:622px;width:12px;height:12px;background:#FFF;border:1px solid;border-color:#7E7A6A #F1EFE2 #F1EFE2 #7E7A6A;box-shadow:inset 1px 1px 0 #ACA899"></div>
<svg style="left:554px;top:622px" width="12" height="12" viewBox="0 0 12 12"><path d="M3 5L5 7.3 9.5 3V5.8L5 10.2 3 7.8z" fill="#000"/></svg>
<div class="t" style="right:332.00px;top:621.00px;font-size:16px;color:#1A1A1A;font-weight:normal;transform:scaleX(0.700);transform-origin:right;letter-spacing:1px">1:3,000,000</div>
<div class="t" style="right:280.00px;top:621.00px;font-size:16px;color:#1A1A1A;font-weight:normal;transform:scaleX(0.660);transform-origin:right;letter-spacing:1px">1:1</div>
<div class="t" style="right:197.00px;top:621.00px;font-size:16px;color:#1A1A1A;font-weight:normal;transform:scaleX(0.700);transform-origin:right;letter-spacing:1px">1:3,000,000</div>
<div class="t" style="right:144.00px;top:621.00px;font-size:16px;color:#1A1A1A;font-weight:normal;transform:scaleX(0.660);transform-origin:right;letter-spacing:1px">1:1</div>
<div class="t" style="left:326.00px;top:645.00px;font-size:16px;color:#5B2C9E;font-weight:normal;transform:scaleX(0.755);transform-origin:left;letter-spacing:0.9px">Unified School Dist - P</div>
<div class="ab" style="left:495px;top:642px;width:20px;height:20px;background:#FFFFFF;"></div>
<div class="ab" style="left:499px;top:646px;width:12px;height:12px;background:#FFF;border:1px solid;border-color:#7E7A6A #F1EFE2 #F1EFE2 #7E7A6A;box-shadow:inset 1px 1px 0 #ACA899"></div>
<svg style="left:499px;top:646px" width="12" height="12" viewBox="0 0 12 12"><path d="M3 5L5 7.3 9.5 3V5.8L5 10.2 3 7.8z" fill="#000"/></svg>
<div class="ab" style="left:550px;top:642px;width:20px;height:20px;background:#FFFFFF;"></div>
<div class="ab" style="left:554px;top:646px;width:12px;height:12px;background:#FFF;border:1px solid;border-color:#7E7A6A #F1EFE2 #F1EFE2 #7E7A6A;box-shadow:inset 1px 1px 0 #ACA899"></div>
<svg style="left:554px;top:646px" width="12" height="12" viewBox="0 0 12 12"><path d="M3 5L5 7.3 9.5 3V5.8L5 10.2 3 7.8z" fill="#000"/></svg>
<div class="t" style="right:332.00px;top:645.00px;font-size:16px;color:#1A1A1A;font-weight:normal;transform:scaleX(0.700);transform-origin:right;letter-spacing:1px">1:3,000,000</div>
<div class="t" style="right:280.00px;top:645.00px;font-size:16px;color:#1A1A1A;font-weight:normal;transform:scaleX(0.660);transform-origin:right;letter-spacing:1px">1:1</div>
<div class="t" style="right:197.00px;top:645.00px;font-size:16px;color:#1A1A1A;font-weight:normal;transform:scaleX(0.700);transform-origin:right;letter-spacing:1px">1:3,000,000</div>
<div class="t" style="right:144.00px;top:645.00px;font-size:16px;color:#1A1A1A;font-weight:normal;transform:scaleX(0.660);transform-origin:right;letter-spacing:1px">1:1</div>
<div class="t" style="left:326.00px;top:673.00px;font-size:16px;color:#0A2A66;font-weight:bold;transform:scaleX(0.745);transform-origin:left;letter-spacing:0.8px">Views</div>
<div class="ab" style="left:366px;top:668px;width:219px;height:22px;background:#FFFFFF;border:1px solid #7F9DB9"></div>
<div class="t" style="left:371.00px;top:674.00px;font-size:12px;color:#000;font-weight:normal;">- - - - -</div>
<div class="ab" style="left:568px;top:670px;width:15px;height:18px;background:linear-gradient(135deg,#D0DCFC,#B4C8F8);border-radius:2px"></div>
<svg style="left:571px;top:676px" width="9" height="7"><path d="M1 1.5l3.5 3.5 3.5-3.5" stroke="#4D6185" stroke-width="2" fill="none"/></svg>
<div class="ab" style="left:593px;top:666px;width:108px;height:24px;background:#FFFFFF;border:1px solid;border-color:#F1EFE2 #716F64 #716F64 #F1EFE2;box-shadow:inset -1px -1px 0 #ACA899"></div>
<div class="t" style="left:612.00px;top:672.00px;font-size:12.5px;color:#000;font-weight:normal;">Redraw Map</div>
<div class="ab" style="left:705px;top:666px;width:51px;height:24px;background:#FFFFFF;border:1px solid;border-color:#F1EFE2 #716F64 #716F64 #F1EFE2;box-shadow:inset -1px -1px 0 #ACA899"></div>
<div class="t" style="left:713.00px;top:672.00px;font-size:12.5px;color:#000;font-weight:normal;">Reset</div>
<div class="ab" style="left:993px;top:118px;width:17px;height:574px;background:linear-gradient(90deg,#EEEDE5,#FBFBF8 60%,#FEFEFB);"></div>
<div class="ab" style="left:1010px;top:118px;width:2px;height:593px;background:#FBFBF2;"></div>
<div class="ab" style="left:6px;top:692px;width:987px;height:17px;background:linear-gradient(#EEEDE5,#FBFBF8 60%,#FEFEFB);"></div>
<div class="ab" style="left:993px;top:692px;width:17px;height:17px;background:#ECE9D8;"></div>
<div class="sb" style="left:995px;top:119px;width:13px;height:14px"></div>
<svg style="left:997px;top:123px" width="10" height="7"><path d="M1 5.5l4-4 4 4" stroke="#4D6185" stroke-width="2" fill="none"/></svg>
<div class="sb" style="left:995px;top:193px;width:13px;height:257px;background:linear-gradient(90deg,#C8D6FB,#BCCFFA 70%,#B4CAF8)"></div>
<div class="ab" style="left:999px;top:317px;width:6px;height:1px;background:#8CA4E0;"></div>
<div class="ab" style="left:999px;top:319px;width:6px;height:1px;background:#8CA4E0;"></div>
<div class="ab" style="left:999px;top:321px;width:6px;height:1px;background:#8CA4E0;"></div>
<div class="ab" style="left:999px;top:323px;width:6px;height:1px;background:#8CA4E0;"></div>
<div class="sb" style="left:995px;top:676px;width:13px;height:14px"></div>
<svg style="left:997px;top:680px" width="10" height="7"><path d="M1 1.5l4 4 4-4" stroke="#4D6185" stroke-width="2" fill="none"/></svg>
<div class="sb" style="left:7px;top:694px;width:14px;height:14px"></div>
<svg style="left:11px;top:696px" width="7" height="10"><path d="M5.5 1l-4 4 4 4" stroke="#4D6185" stroke-width="2" fill="none"/></svg>
<div class="sb" style="left:225px;top:694px;width:585px;height:13px;background:linear-gradient(#C8D6FB,#BCCFFA 70%,#B4CAF8)"></div>
<div class="ab" style="left:514px;top:697px;width:1px;height:6px;background:#8CA4E0;"></div>
<div class="ab" style="left:516px;top:697px;width:1px;height:6px;background:#8CA4E0;"></div>
<div class="ab" style="left:518px;top:697px;width:1px;height:6px;background:#8CA4E0;"></div>
<div class="ab" style="left:520px;top:697px;width:1px;height:6px;background:#8CA4E0;"></div>
<div class="sb" style="left:977px;top:694px;width:14px;height:14px"></div>
<svg style="left:981px;top:696px" width="7" height="10"><path d="M1.5 1l4 4-4 4" stroke="#4D6185" stroke-width="2" fill="none"/></svg>
<div class="ab" style="left:5px;top:709px;width:1007px;height:1px;background:#FFFFFF;"></div>
<div class="ab" style="left:5px;top:710px;width:1007px;height:1px;background:#D0CCBC;"></div>
<div class="ab" style="left:5px;top:711px;width:1007px;height:1px;background:#8C8A7E;"></div>
<div class="ab" style="left:4px;top:712px;width:1008px;height:22px;background:linear-gradient(#ECE9D8,#EEEBDD 60%,#E4E0CE);"></div>
<svg style="left:4px;top:713px" width="20" height="20" viewBox="0 0 20 20">
<defs><linearGradient id="iep4" x1="0" y1="0" x2="1" y2="1"><stop offset="0" stop-color="#FFFFFF"/><stop offset="1" stop-color="#C0D0F4"/></linearGradient></defs>
<rect x="6.5" y="3.5" width="11" height="14" fill="#9A98A8" opacity="0.6"/>
<path d="M5.5 2.5h9l2 2v12h-11z" fill="url(#iep4)" stroke="#6C74B4" stroke-width="1"/>
<path d="M3.2 15.5 C1.5 12,5 5.5,13.5 3.8" stroke="#38A8F0" stroke-width="1.3" fill="none" stroke-dasharray="1.5 0.8"/>
<path d="M11.9 10.6 A4 4 0 1 0 11.2 12.8" stroke="#1E78E0" stroke-width="2.6" fill="none"/>
<path d="M4.5 10.6h7.6" stroke="#1E78E0" stroke-width="1.7"/>
<circle cx="8" cy="8.3" r="1" fill="#FFFFFF"/>
</svg>
<div class="ab" style="left:737px;top:714px;width:1px;height:19px;background:#C5C2B2;"></div>
<div class="ab" style="left:738px;top:714px;width:1px;height:19px;background:#FFFFFF;"></div>
<div class="ab" style="left:761px;top:714px;width:1px;height:19px;background:#C5C2B2;"></div>
<div class="ab" style="left:762px;top:714px;width:1px;height:19px;background:#FFFFFF;"></div>
<div class="ab" style="left:785px;top:714px;width:1px;height:19px;background:#C5C2B2;"></div>
<div class="ab" style="left:786px;top:714px;width:1px;height:19px;background:#FFFFFF;"></div>
<div class="ab" style="left:809px;top:714px;width:1px;height:19px;background:#C5C2B2;"></div>
<div class="ab" style="left:810px;top:714px;width:1px;height:19px;background:#FFFFFF;"></div>
<div class="ab" style="left:833px;top:714px;width:1px;height:19px;background:#C5C2B2;"></div>
<div class="ab" style="left:834px;top:714px;width:1px;height:19px;background:#FFFFFF;"></div>
<div class="ab" style="left:857px;top:714px;width:1px;height:19px;background:#C5C2B2;"></div>
<div class="ab" style="left:858px;top:714px;width:1px;height:19px;background:#FFFFFF;"></div>
<svg style="left:862px;top:716px" width="15" height="15" viewBox="0 0 15 15">
<circle cx="7.5" cy="7.5" r="6.8" fill="#2AA02A" stroke="#105010" stroke-width="1.2"/>
<path d="M4 7.5l2.5 2.5 4.5-5" stroke="#FFF" stroke-width="2" fill="none"/>
</svg>
<div class="t" style="left:882.00px;top:719.00px;font-size:11px;color:#000;font-weight:normal;">Trusted sites</div>
<div class="ab" style="left:1007px;top:722px;width:2px;height:2px;background:#B8B5A6;"></div>
<div class="ab" style="left:1004px;top:725px;width:2px;height:2px;background:#B8B5A6;"></div>
<div class="ab" style="left:1007px;top:725px;width:2px;height:2px;background:#B8B5A6;"></div>
<div class="ab" style="left:1001px;top:728px;width:2px;height:2px;background:#B8B5A6;"></div>
<div class="ab" style="left:1004px;top:728px;width:2px;height:2px;background:#B8B5A6;"></div>
<div class="ab" style="left:1007px;top:728px;width:2px;height:2px;background:#B8B5A6;"></div>
</body></html>
